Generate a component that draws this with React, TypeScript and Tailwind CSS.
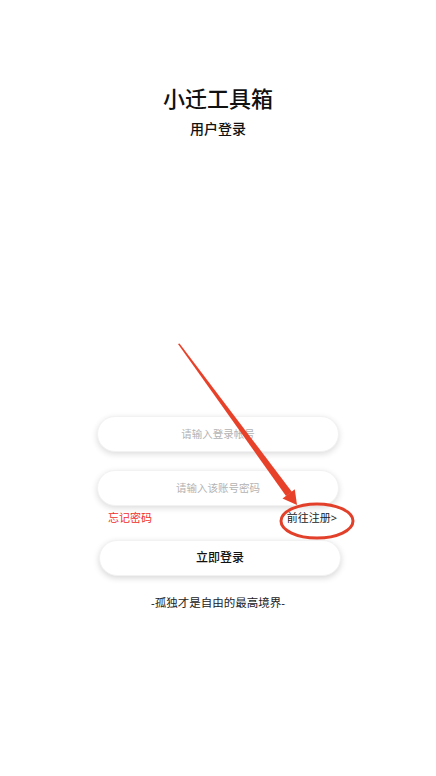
export default function App() {
  return (
    <div className="relative w-[436px] h-[776px] bg-white font-['Noto_Sans','Noto_Sans_CJK_SC',sans-serif] text-[#111]">
      <div className="flex flex-col items-center pt-[84px]">
        <h1 className="text-[22px] leading-[28px] font-medium">小迁工具箱</h1>
        <h2 className="mt-[7px] text-[14px] leading-[20px] font-medium">用户登录</h2>
      </div>

      <div className="flex flex-col mt-[277px]">
        <input
          placeholder="请输入登录帐号"
          className="mx-auto w-[242px] h-[36px] rounded-full bg-white text-center text-[10.5px] outline-none placeholder:text-[#b3b3b3] shadow-[0_2px_6px_rgba(0,0,0,0.14)] border border-[#f2f2f2]"
        />
        <input
          type="password"
          placeholder="请输入该账号密码"
          className="mx-auto mt-[18px] w-[242px] h-[36px] rounded-full bg-white text-center text-[10.5px] outline-none placeholder:text-[#b3b3b3] shadow-[0_2px_6px_rgba(0,0,0,0.14)] border border-[#f2f2f2]"
        />
        <div className="flex justify-between pl-[108px] pr-[99px] mt-[4px] text-[11px] leading-[16px]">
          <span className="text-[#f0302a]">忘记密码</span>
          <span className="text-[#222]">前往注册&gt;</span>
        </div>
        <button className="ml-[99px] mt-[14px] w-[242px] h-[36px] rounded-full bg-white text-[12px] font-medium shadow-[0_2px_6px_rgba(0,0,0,0.16)] border border-[#f2f2f2]">
          立即登录
        </button>
        <p className="mt-[19px] text-center text-[11.5px] leading-[16px] text-[#222]">-孤独才是自由的最高境界-</p>
      </div>

      <svg className="absolute left-0 top-0 pointer-events-none" width="436" height="776">
        <polygon points="178,344 179.5,343.5 292,492 286,496" fill="#e8412a" />
        <polygon points="297,505 282.5,498.5 294.8,489.3" fill="#e8412a" />
        <ellipse cx="317" cy="521" rx="36" ry="17" fill="none" stroke="#e2402a" strokeWidth="3" />
      </svg>
    </div>
  );
}
